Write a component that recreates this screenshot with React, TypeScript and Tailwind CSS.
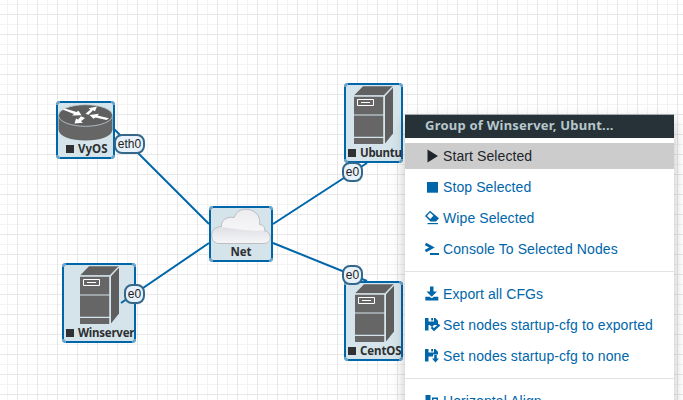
import React from "react";

type NodeProps = {
  box: string;
  label: string;
  labelClass: string;
  status?: boolean;
  children: React.ReactNode;
};

function TopologyNode({ box, label, labelClass, status = true, children }: NodeProps) {
  return (
    <div className={`absolute rounded-[4px] border-2 border-[#0066aa] bg-[#d5e4ea] ${box}`}>
      {children}
      <div
        className={`absolute flex items-center whitespace-nowrap text-[11.5px] leading-[14px] font-bold text-[#2d2f31] ${labelClass}`}
      >
        {status && <span className="mr-[4px] block size-[8px] shrink-0 bg-[#2f3133]" />}
        <span>{label}</span>
      </div>
      <span className="absolute -left-[2px] -top-[2px] size-[4px] rounded-tl-[4px] border-l-2 border-t-2 border-[#6fa6cc]" />
      <span className="absolute -right-[2px] -top-[2px] size-[4px] rounded-tr-[4px] border-r-2 border-t-2 border-[#6fa6cc]" />
      <span className="absolute -bottom-[2px] -left-[2px] size-[4px] rounded-bl-[4px] border-b-2 border-l-2 border-[#6fa6cc]" />
      <span className="absolute -bottom-[2px] -right-[2px] size-[4px] rounded-br-[4px] border-b-2 border-r-2 border-[#6fa6cc]" />
    </div>
  );
}

function Server({ className }: { className: string }) {
  return (
    <svg className={`absolute ${className}`} width="40" height="59" viewBox="0 0 40 59">
      <path d="M0 9.5 9 .3H39L30 9.5Z" fill="#616161" />
      <path d="M0 10.5H29.5V58H0Z" fill="#666" />
      <path d="M31 10.2 39 1.5V47.5L31 57.5Z" fill="#5e5e5e" />
      <path d="M0 9.8H30V58M30 9.8 38.8.8M0 29H30M0 51.3H30" fill="none" stroke="#d5e4ea" strokeWidth="1.2" />
      <path d="M3.5 13.5H19.5V19.5H3.5Z" fill="none" stroke="#fff" strokeWidth="1" />
      <path d="M7 16.5H16" stroke="#fff" />
    </svg>
  );
}

function Router() {
  return (
    <svg className="absolute left-0 top-[1px]" width="55" height="37" viewBox="0 0 55 37">
      <path d="M.5 11V26C1.500 32.500 13 36.500 27.500 36.500S53.500 32.500 54.500 26V11Z" fill="#666" />
      <ellipse cx="27.500" cy="11.500" rx="27" ry="10.800" fill="#5f5f5f" stroke="#c2d0d6" strokeWidth=".8" />
      <g fill="#fff">
        <path d="M4.500 5.500 7 4.500 18.500 8 20.500 6.800 23.500 11.200 14 11.500 16 10Z" />
        <path d="M27.500 9.800 32.500 5.500 30.500 4.200 39 2.400 37 7.200 35 6.300 30.500 10.800Z" />
        <path d="M23 12.300 27 14 23 17.300 25 18.700 16.500 19.500 18 14.500 20 15.500Z" />
        <path d="M51 14.200 48.500 16 37.500 13.500 35.500 14.800 31.500 11 41 9.800 39.500 11.500Z" />
      </g>
    </svg>
  );
}

function Cloud() {
  return (
    <svg className="absolute left-0 top-0" width="60" height="37" viewBox="0 0 60 37">
      <defs>
        <linearGradient id="cloud" x1="0" y1="0" x2="0" y2="1">
          <stop stopColor="#ececef" />
          <stop offset="1" stopColor="#fcfcfd" />
        </linearGradient>
        <linearGradient id="cloud-low" x1="0" y1="0" x2="0" y2="1">
          <stop stopColor="#dedfe3" />
          <stop offset="1" stopColor="#f8f8fa" />
        </linearGradient>
        <clipPath id="cloud-shape">
          <path d="M7 35.500C2.500 34.500.5 31 .7 27 .5 22 5 18.500 10.500 18.500 10 12 16 8 23 9.500 26 2 32 .5 38 1.500 45 3 50 9 48.500 16.500 52.500 17 54 19 53.500 22.500 58 24 59.500 27.500 59.300 30.500 59 33.500 56 35.500 53 35.500Z" />
        </clipPath>
      </defs>
      <g clipPath="url(#cloud-shape)">
        <path d="M0 0H60V37H0Z" fill="url(#cloud)" />
        <path d="M0 19C20 18 34 25 60 22V37H0Z" fill="url(#cloud-low)" />
      </g>
      <path
        d="M7 35.500C2.500 34.500.5 31 .7 27 .5 22 5 18.500 10.500 18.500 10 12 16 8 23 9.500 26 2 32 .5 38 1.500 45 3 50 9 48.500 16.500 52.500 17 54 19 53.500 22.500 58 24 59.500 27.500 59.300 30.500 59 33.500 56 35.500 53 35.500Z"
        fill="none"
        stroke="#b5b7bb"
        strokeWidth=".9"
      />
    </svg>
  );
}

function PortLabel({ className, children }: { className: string; children: string }) {
  return (
    <div
      className={`absolute flex h-[20px] items-center justify-center rounded-[8px] border-2 border-[#346789] bg-[#e8f2fc] pb-[1px] font-['Liberation_Sans',sans-serif] text-[12px] leading-none text-[#222] ${className}`}
    >
      {children}
    </div>
  );
}

type IconName = "play" | "stop" | "wipe" | "console" | "export" | "saveCheck" | "saveDown" | "align";

function Icon({ name }: { name: IconName }) {
  return (
    <svg width="16" height="16" viewBox="0 0 16 16" fill="currentColor" className="shrink-0">
      {name === "play" && <path d="M2.500 1.500 13 8 2.500 14.500Z" />}
      {name === "stop" && <path d="M2 3H13V13.700H2Z" />}
      {name === "wipe" && (
        <>
          <path d="M5 .8 14 8.200 11 11.500H5.500L0 6Z" />
          <path d="M5 2.500 8.400 5.700 5.300 9 2 6Z" fill="#fff" />
          <path d="M2.500 13H13V14.200H2.500Z" />
        </>
      )}
      {name === "console" && (
        <>
          <path d="M.5 2.900 7 6.500.5 10.100" fill="none" stroke="currentColor" strokeWidth="2.700" />
          <path d="M5 12H14V14H5Z" />
        </>
      )}
      {name === "export" && (
        <>
          <path d="M5 .5H8.500V5.500H12L6.750 10.800 1.500 5.500H5Z" />
          <path d="M.3 10.800H4.500L6.750 12.300 9 10.800H13.300V14.500H.3Z" />
        </>
      )}
      {(name === "saveCheck" || name === "saveDown") && (
        <>
          <path d="M0 1H10.300L13 3.700V13.500H0Z" />
          <path d="M3.500 1H9V4.500H3.500Z" fill="#fff" />
          <path d="M6.200 1H8V3.500H6.200Z" />
        </>
      )}
      {name === "saveCheck" && (
        <>
          <path d="M3.500 8H14V14H3.500Z" fill="#fff" />
          <path d="M3.500 7H10L7 10Z" />
          <path d="m6.500 10.200 2.500 2.500L14.500 7.700" fill="none" stroke="currentColor" strokeWidth="2.300" />
        </>
      )}
      {name === "saveDown" && (
        <>
          <path d="M3.500 8.500H8V14H3.500ZM8 6.500H14V14H8Z" fill="#fff" />
          <path d="M9.200 7H11.800V10.500H14L10.500 14.400 7 10.500H9.200Z" />
        </>
      )}
      {name === "align" && <path d="M.5 2H5.500V15H.5ZM7 4.500H13V15H11.500V6H8.500V15H7Z" />}
    </svg>
  );
}

function MenuItem({ icon, children, active = false }: { icon: IconName; children: string; active?: boolean }) {
  return (
    <li
      className={`flex h-[26px] shrink-0 items-center gap-[2px] pl-[20px] whitespace-nowrap ${
        active ? "bg-[#cccccc] text-[#212529]" : "text-[#0066aa]"
      }`}
    >
      <Icon name={icon} />
      <span className="text-[14px] leading-[20px] tracking-[0.09px]">{children}</span>
    </li>
  );
}

function Divider() {
  return <li className="my-[4px] h-px shrink-0 bg-[#e2e2e2]" />;
}

function ContextMenu() {
  return (
    <div className="absolute left-[405px] top-[114px] h-[310px] w-[269px] bg-white font-['Liberation_Sans',sans-serif] shadow-[0_6px_12px_rgba(0,0,0,0.25)]">
      <div className="h-[24px] border-t border-[#a5aaad] bg-[#263238] pl-[20px] font-['Noto_Sans',sans-serif] text-[13px] leading-[21px] font-bold tracking-[0.23px] text-[#b8c7cc]">
        Group of Winserver, Ubunt...
      </div>
      <ul className="flex flex-col gap-[5px] pt-[5px]">
        <MenuItem icon="play" active>Start Selected</MenuItem>
        <MenuItem icon="stop">Stop Selected</MenuItem>
        <MenuItem icon="wipe">Wipe Selected</MenuItem>
        <MenuItem icon="console">Console To Selected Nodes</MenuItem>
        <Divider />
        <MenuItem icon="export">Export all CFGs</MenuItem>
        <MenuItem icon="saveCheck">Set nodes startup-cfg to exported</MenuItem>
        <MenuItem icon="saveDown">Set nodes startup-cfg to none</MenuItem>
        <Divider />
        <MenuItem icon="align">Horizontal Align</MenuItem>
      </ul>
    </div>
  );
}

function Grid() {
  return (
    <svg className="absolute inset-0" width="683" height="400" shapeRendering="crispEdges">
      <defs>
        <pattern id="grid" width="20" height="20" patternUnits="userSpaceOnUse">
          <path d="M7 0H8V20H7ZM0 4H20V5H0Z" fill="#f3f3f3" />
          <path d="M17 0H18V20H17ZM0 14H20V15H0Z" fill="#e7e7e7" />
        </pattern>
      </defs>
      <rect width="683" height="400" fill="url(#grid)" />
    </svg>
  );
}

export default function App() {
  return (
    <main className="relative h-[400px] w-[683px] overflow-hidden bg-white font-['Noto_Sans',sans-serif]">
      <Grid />
      <TopologyNode box="left-[56px] top-[101px] h-[58px] w-[59px]" label="VyOS" labelClass="left-[8px] top-[39px]">
        <Router />
      </TopologyNode>
      <TopologyNode
        box="left-[209px] top-[206px] h-[56px] w-[64px]"
        label="Net"
        labelClass="left-0 top-[37px] w-full justify-center"
        status={false}
      >
        <Cloud />
      </TopologyNode>
      <TopologyNode box="left-[62px] top-[263px] h-[80px] w-[74px]" label="Winserver" labelClass="left-[2px] top-[61px] tracking-[-0.25px]">
        <Server className="left-[16px] top-[1px]" />
      </TopologyNode>
      <TopologyNode box="left-[344px] top-[83px] h-[80px] w-[59px]" label="Ubuntu" labelClass="left-[2px] top-[61px] tracking-[-0.3px]">
        <Server className="left-[8px] top-[1px]" />
      </TopologyNode>
      <TopologyNode box="left-[344px] top-[281px] h-[80px] w-[59px]" label="CentOS" labelClass="left-[2px] top-[61px] tracking-[-0.1px]">
        <Server className="left-[9px] top-[1px]" />
      </TopologyNode>
      <svg className="absolute inset-0" width="683" height="400" fill="none" stroke="#0066aa" strokeWidth="2">
        <path d="M114 129 209 224M273 224 367 163M209 243 121 303M273 243 367 281" />
      </svg>
      <PortLabel className="left-[114px] top-[134px] w-[31px]">eth0</PortLabel>
      <PortLabel className="left-[124px] top-[284px] w-[21px]">e0</PortLabel>
      <PortLabel className="left-[342px] top-[162px] w-[21px]">e0</PortLabel>
      <PortLabel className="left-[342px] top-[265px] w-[21px]">e0</PortLabel>
      <ContextMenu />
    </main>
  );
}
